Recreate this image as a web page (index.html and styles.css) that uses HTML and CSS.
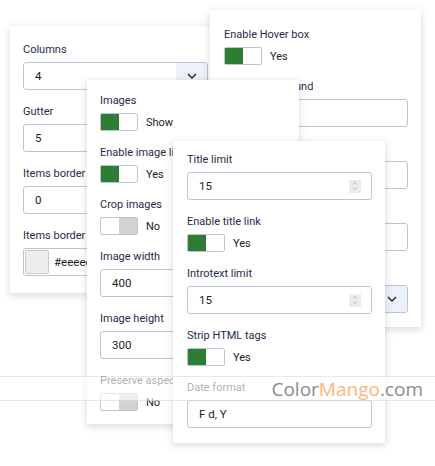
FILE: index.html
```html
<!DOCTYPE html>
<html>
<head>
	<meta charset="utf-8">
	<title>Grid settings</title>
	<link rel="stylesheet" href="styles.css">
</head>
<body>

<div class="canvas">

	<!-- layout options -->
	<section class="panel panel-layout">
		<div class="field">
			<label>Columns</label>
			<div class="input select">
				<span class="value">4</span>
				<span class="caret"><svg width="10" height="6" viewBox="0 0 10 6"><path d="M1 1l4 4 4-4" fill="none" stroke="#1e2333" stroke-width="1.4"/></svg></span>
			</div>
		</div>
		<div class="field">
			<label>Gutter</label>
			<div class="input"><span class="value">5</span></div>
		</div>
		<div class="field">
			<label>Items border width</label>
			<div class="input"><span class="value">0</span></div>
		</div>
		<div class="field">
			<label>Items border color</label>
			<div class="input color">
				<span class="swatch"></span>
				<span class="value">#eeeeee</span>
			</div>
		</div>
	</section>

	<!-- hover options -->
	<section class="panel panel-hover">
		<div class="field">
			<label>Enable Hover box</label>
			<div class="switch"><span class="toggle on"><i></i></span>Yes</div>
		</div>
		<div class="field">
			<label>Hover background</label>
			<div class="input"><span class="value"></span></div>
		</div>
		<div class="field">
			<label>Hover text color</label>
			<div class="input"><span class="value"></span></div>
		</div>
		<div class="field">
			<label>Hover opacity</label>
			<div class="input"><span class="value"></span></div>
		</div>
		<div class="field">
			<label>Hover animation</label>
			<div class="input select">
				<span class="value"></span>
				<span class="caret"><svg width="10" height="6" viewBox="0 0 10 6"><path d="M1 1l4 4 4-4" fill="none" stroke="#1e2333" stroke-width="1.4"/></svg></span>
			</div>
		</div>
	</section>

	<!-- image options -->
	<section class="panel panel-images">
		<div class="field">
			<label>Images</label>
			<div class="switch"><span class="toggle on"><i></i></span>Show</div>
		</div>
		<div class="field">
			<label>Enable image link</label>
			<div class="switch"><span class="toggle on"><i></i></span>Yes</div>
		</div>
		<div class="field">
			<label>Crop images</label>
			<div class="switch"><span class="toggle off"><i></i></span>No</div>
		</div>
		<div class="field">
			<label>Image width</label>
			<div class="input"><span class="value">400</span></div>
		</div>
		<div class="field">
			<label>Image height</label>
			<div class="input"><span class="value">300</span></div>
		</div>
		<div class="field">
			<label>Preserve aspect ratio</label>
			<div class="switch"><span class="toggle off"><i></i></span>No</div>
		</div>
	</section>

	<!-- text options -->
	<section class="panel panel-text">
		<div class="field">
			<label>Title limit</label>
			<div class="input number">
				<span class="value">15</span>
				<span class="spin"><svg width="6" height="10" viewBox="0 0 6 10"><path d="M1 3.5l2-2 2 2M1 6.5l2 2 2-2" fill="none" stroke="#a8acb4" stroke-width="0.9"/></svg></span>
			</div>
		</div>
		<div class="field">
			<label>Enable title link</label>
			<div class="switch"><span class="toggle on"><i></i></span>Yes</div>
		</div>
		<div class="field">
			<label>Introtext limit</label>
			<div class="input number">
				<span class="value">15</span>
				<span class="spin"><svg width="6" height="10" viewBox="0 0 6 10"><path d="M1 3.5l2-2 2 2M1 6.5l2 2 2-2" fill="none" stroke="#a8acb4" stroke-width="0.9"/></svg></span>
			</div>
		</div>
		<div class="field">
			<label>Strip HTML tags</label>
			<div class="switch"><span class="toggle on"><i></i></span>Yes</div>
		</div>
		<div class="field">
			<label>Date format</label>
			<div class="input"><span class="value">F d, Y</span></div>
		</div>
	</section>

	<div class="watermark">
		<span class="grey">Color</span><span class="orange">Mango</span><span class="grey">.com</span>
	</div>

</div>

</body>
</html>
```

FILE: styles.css
```css
body {
	margin: 0;
	background: white;
	font-family: Roboto, "Liberation Sans", sans-serif;
}

.canvas {
	position: relative;
	width: 435px;
	height: 466px;
	overflow: hidden;
	background: white;
}

/* floating settings windows */
.panel {
	position: absolute;
	box-sizing: border-box;
	width: 212px;
	padding: 0 13px;
	background: white;
	box-shadow: 0 2px 7px 1px rgba(0,0,0,0.13);
	display: flex;
	flex-direction: column;
	gap: 14px;
}
.panel-layout {
	left: 10px;
	top: 26px;
	width: 211px;
	padding-top: 16px;
	padding-bottom: 17px;
}
.panel-hover {
	left: 210px;
	top: 10px;
	width: 211px;
	padding-left: 14px;
	padding-top: 17px;
	padding-bottom: 14px;
}
.panel-images {
	left: 87px;
	top: 80px;
	padding-top: 13px;
	padding-bottom: 13px;
}
.panel-text {
	left: 173px;
	top: 141px;
	padding-left: 14px;
	padding-top: 11px;
	padding-bottom: 15px;
}

.field {
	display: flex;
	flex-direction: column;
	gap: 4px;
}
.field label {
	font-size: 11px;
	line-height: 16px;
	color: #1f2b48;
	white-space: nowrap;
}

.input {
	box-sizing: border-box;
	height: 28px;
	border: 1px solid #b9c6da;
	border-radius: 3px;
	display: flex;
	align-items: center;
	font-size: 11.5px;
	color: #1c1c1c;
	background: white;
	overflow: hidden;
}
.input .value {
	flex: 1;
	padding-left: 11px;
	white-space: nowrap;
}

.select .caret {
	width: 31px;
	height: 100%;
	background: #edf2fa;
	display: flex;
	align-items: center;
	justify-content: center;
}

.number .spin {
	width: 12px;
	height: 13px;
	margin-right: 10px;
	background: #ececec;
	display: flex;
	align-items: center;
	justify-content: center;
}

.color .value {
	padding-left: 5px;
}
.color .swatch {
	box-sizing: border-box;
	width: 24px;
	height: 24px;
	margin-left: 1px;
	border: 1px solid #c8ccd2;
	border-radius: 2px;
	background: #eeeeee;
}

/* yes / no switches */
.switch {
	display: flex;
	align-items: center;
	gap: 8px;
	height: 18px;
	font-size: 11px;
	color: #1c1c1c;
}
.toggle {
	box-sizing: border-box;
	width: 38px;
	height: 18px;
	border: 1px solid #b9c6da;
	border-radius: 2px;
	display: flex;
	background: white;
}
.toggle i {
	width: 50%;
	height: 100%;
}
.toggle.on i {
	background: #2e7d32;
}
.toggle.off {
	justify-content: flex-end;
}
.toggle.off i {
	background: #d2d2d2;
}

/* ColorMango band across the shot */
.watermark {
	position: absolute;
	left: 0;
	top: 376px;
	width: 435px;
	height: 25px;
	box-sizing: border-box;
	background: rgba(255,255,255,0.62);
	border-top: 1px solid rgba(0,0,0,0.09);
	border-bottom: 1px solid rgba(0,0,0,0.09);
	display: flex;
	align-items: center;
	justify-content: flex-end;
	padding-right: 12px;
	font-family: "Open Sans", "DejaVu Sans", sans-serif;
	font-size: 19px;
	line-height: 24px;
}
.watermark .grey {
	color: #8c8c8c;
}
.watermark .orange {
	color: #ffb47e;
}
```
